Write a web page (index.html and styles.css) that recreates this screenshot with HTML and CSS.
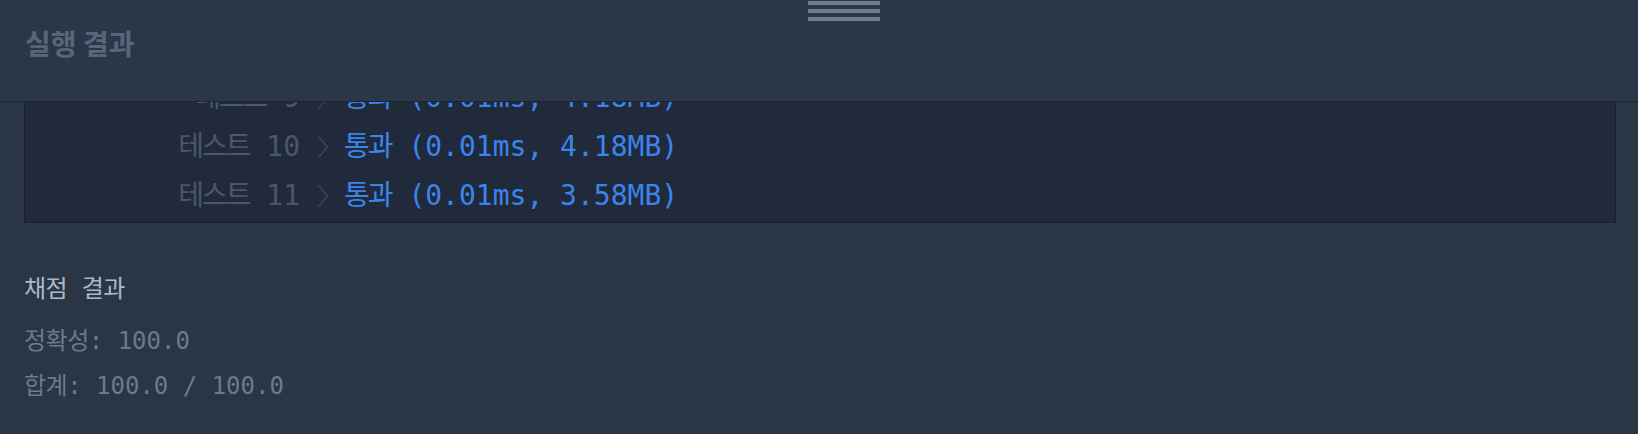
FILE: index.html
```html
<!DOCTYPE html>
<html>
<head>
    <title>실행 결과</title>
    <link rel="stylesheet" href="styles.css">
</head>
<body>
    <div class="panel">
        <div class="panel-header">
            <div class="drag-handle">
                <span></span>
                <span></span>
                <span></span>
            </div>
            <h2 class="panel-title">실행 결과</h2>
        </div>

        <div class="panel-body">
            <!-- 실행 결과 목록 (스크롤된 상태) -->
            <div class="result-box">
                <div class="result-row">
                    <div class="result-label"><span class="ko">테스트</span> 9</div>
                    <svg class="chevron" width="12" height="24" viewBox="0 0 12 24"><path d="M1.5 1.5 L10.5 12 L1.5 22.5" fill="none" stroke="currentColor" stroke-width="1.4"/></svg>
                    <div class="result-value passed"><span class="ko">통과</span> (0.01ms, 4.18MB)</div>
                </div>
                <div class="result-row">
                    <div class="result-label"><span class="ko">테스트</span> 10</div>
                    <svg class="chevron" width="12" height="24" viewBox="0 0 12 24"><path d="M1.5 1.5 L10.5 12 L1.5 22.5" fill="none" stroke="currentColor" stroke-width="1.4"/></svg>
                    <div class="result-value passed"><span class="ko">통과</span> (0.01ms, 4.18MB)</div>
                </div>
                <div class="result-row">
                    <div class="result-label"><span class="ko">테스트</span> 11</div>
                    <svg class="chevron" width="12" height="24" viewBox="0 0 12 24"><path d="M1.5 1.5 L10.5 12 L1.5 22.5" fill="none" stroke="currentColor" stroke-width="1.4"/></svg>
                    <div class="result-value passed"><span class="ko">통과</span> (0.01ms, 3.58MB)</div>
                </div>
            </div>

            <div class="score">
                <div class="score-title"><span class="ko">채점</span> <span class="ko">결과</span></div>
                <div class="score-line"><span class="ko">정확성</span>: 100.0</div>
                <div class="score-line"><span class="ko">합계</span>: 100.0 / 100.0</div>
            </div>
        </div>
    </div>
</body>
</html>
```

FILE: styles.css
```css
body {
    margin: 0;
    padding: 0;
    background: #2a3646;
    overflow: hidden;
    height: 100vh;
}

.panel {
    display: flex;
    flex-direction: column;
    height: 100%;
}

.panel-header {
    position: relative;
    height: 102px;
    box-sizing: border-box;
    padding: 23px 24px 0 25px;
    border-bottom: 1px solid #1c2533;
    background: #2b3748;
    flex-shrink: 0;
}

/* 패널 크기 조절 손잡이 */
.drag-handle {
    position: absolute;
    top: 1px;
    left: 808px;
    width: 72px;
    display: flex;
    flex-direction: column;
    gap: 4px;
}

.drag-handle span {
    display: block;
    height: 4px;
    background: #6e7f8c;
}

.panel-title {
    margin: 0;
    font-family: "Noto Sans CJK KR", sans-serif;
    font-size: 28px;
    font-weight: 700;
    line-height: 40px;
    color: #56677a;
}

.panel-body {
    flex: 1;
    overflow: hidden;
    padding: 0 22px 0 24px;
    font-family: "DejaVu Sans Mono", "Noto Sans CJK KR", monospace;
}

.result-box {
    margin-top: -30px;
    padding-bottom: 2px;
    background: #212a3b;
    border: 1px solid #19212f;
}

.result-row {
    display: flex;
    align-items: center;
    height: 49px;
    font-size: 28px;
    line-height: 49px;
}

.result-row .ko {
    letter-spacing: -2px;
}

.result-label {
    width: 275px;
    text-align: right;
    color: #4a5768;
    white-space: pre;
}

.chevron {
    margin: 0 15px 0 17px;
    color: #3b4657;
    flex-shrink: 0;
}

.result-value {
    white-space: pre;
}

.result-value.passed {
    color: #3a84ec;
}

.score {
    margin-top: 44px;
    font-size: 24px;
    line-height: 45px;
}

.score .ko {
    letter-spacing: -0.5px;
}

.score-title {
    color: #aeb9c5;
    margin-bottom: 7px;
    white-space: pre;
}

.score-line {
    color: #687c8b;
    white-space: pre;
}
```
